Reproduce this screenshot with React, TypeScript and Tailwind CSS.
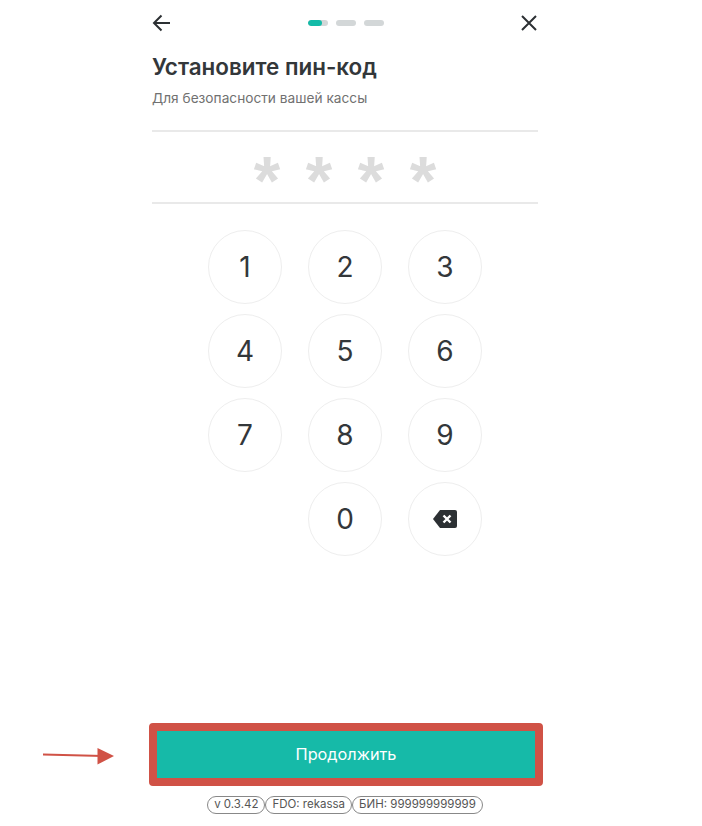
const digits = ['1', '2', '3', '4', '5', '6', '7', '8', '9'];
const badges = ['v 0.3.42', 'FDO: rekassa', 'БИН: 999999999999'];

function Key({ children }: { children: React.ReactNode }) {
  return (
    <button className="w-[74px] h-[74px] rounded-full border-[1.5px] border-[#eeeeee] bg-white flex items-center justify-center text-[28px] leading-none text-[#33373a]">
      {children}
    </button>
  );
}

export default function App() {
  return (
    <div className="relative w-[702px] h-[826px] bg-white overflow-hidden font-['Inter',sans-serif]">
      <div className="w-[386px] ml-[152px] h-full flex flex-col">
        <div className="h-[46px] flex items-center justify-between">
          <svg viewBox="0 0 18 18" className="w-[18px] h-[18px] text-[#2c3033]" fill="none" stroke="currentColor" strokeWidth="2">
            <path d="M18 9H2.500M9.500 1.500L2 9l7.500 7.500" />
          </svg>
          <div className="flex gap-2">
            <div className="w-5 h-[6px] rounded-full bg-[#d3d7d8] overflow-hidden">
              <div className="w-[14px] h-full rounded-full bg-[#14bba8]" />
            </div>
            <div className="w-5 h-[6px] rounded-full bg-[#d3d7d8]" />
            <div className="w-5 h-[6px] rounded-full bg-[#d3d7d8]" />
          </div>
          <svg viewBox="0 0 16 16" className="w-4 h-4 mr-px text-[#2c3033]" fill="none" stroke="currentColor" strokeWidth="2">
            <path d="M1 1l14 14M15 1L1 15" />
          </svg>
        </div>

        <h1 className="mt-[6px] text-[22.4px] leading-[30px] font-semibold text-[#33373a]">Установите пин-код</h1>
        <p className="mt-[7px] text-[13.7px] leading-[18px] text-[#717171]">Для безопасности вашей кассы</p>

        <div className="mt-[23px] h-[74px] border-y-2 border-[#e9e9e9] flex justify-center gap-[25px] text-[68px] leading-[40px] font-bold font-['Liberation_Sans',sans-serif] text-[#dcdcdc]">
          {[0, 1, 2, 3].map((i) => (
            <span key={i} className="w-[27px] text-center pt-[28px]">*</span>
          ))}
        </div>

        <div className="mt-[26px] ml-[56px] grid grid-cols-[74px_74px_74px] gap-x-[26px] gap-y-[10px]">
          {digits.map((d) => (
            <Key key={d}>{d}</Key>
          ))}
          <div />
          <Key>0</Key>
          <Key>
            <svg viewBox="0 0 24 18" className="w-6 h-[18px]">
              <path d="M7 0h15a2 2 0 012 2v14a2 2 0 01-2 2H7L0 9z" fill="#2c3033" />
              <path d="M10.500 5.500l7 7m0-7l-7 7" stroke="#fff" strokeWidth="2.400" fill="none" />
            </svg>
          </Key>
        </div>

        <div className="mt-auto mb-[12px] flex flex-col items-center">
          <div className="self-start -ml-[3px] w-[394px] h-[63px] rounded-[4px] border-[8px] border-[#d05246] bg-[#16baa8] flex items-center justify-center text-[16.300px] text-white">
            Продолжить
          </div>
          <div className="mt-[10px] flex text-[11.500px] leading-none text-[#555]">
            {badges.map((b) => (
              <span key={b} className="h-[18px] px-[6px] rounded-full border border-[#888] flex items-center whitespace-nowrap">
                {b}
              </span>
            ))}
          </div>
        </div>
      </div>

      <svg className="absolute left-[42px] top-[745px]" width="76" height="24" viewBox="0 0 76 24">
        <path d="M1 9.500l60 1.500" stroke="#d05246" strokeWidth="1.800" fill="none" />
        <path d="M55.500 3L72 11l-16.500 8.500z" fill="#d05246" />
      </svg>
    </div>
  );
}
